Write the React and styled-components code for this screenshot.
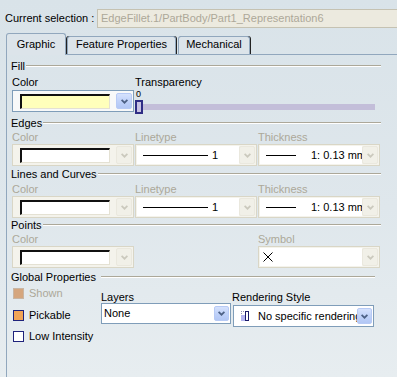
import React from 'react';
import styled, { createGlobalStyle } from 'styled-components';

const GlobalStyle = createGlobalStyle`
  html, body { margin: 0; padding: 0; }
  body {
    background: #e2e9ed;
    font-family: "Liberation Sans", Arial, sans-serif;
    font-size: 11px;
    color: #000;
  }
`;

const Window = styled.div`
  width: 397px;
  height: 377px;
  overflow: hidden;
  display: flex;
  flex-direction: column;
  background: linear-gradient(180deg, #d9e3e9 0%, #dfe7ec 55%, #e7edf0 100%);
`;

const SelectionRow = styled.div`
  display: flex;
  align-items: center;
  height: 19px;
  margin-top: 9px;
  padding-left: 5px;
  white-space: nowrap;
`;

const SelectionLabel = styled.span`
  flex: none;
  width: 92px;
  line-height: 13px;
`;

const SelectionField = styled.div`
  flex: none;
  box-sizing: border-box;
  width: 310px;
  height: 19px;
  padding-left: 3px;
  border: 1px solid #c5c2b2;
  background: #eceadf;
  color: #aca899;
  line-height: 17px;
`;

const TabRow = styled.div`
  display: flex;
  align-items: flex-end;
  box-sizing: border-box;
  height: 22px;
  margin: 5px 0 0 6px;
  border-bottom: 1px solid #91a7bd;
`;

const Tab = styled.div`
  position: relative;
  z-index: ${p => (p.$active ? 1 : 0)};
  box-sizing: border-box;
  flex: none;
  width: ${p => p.$width}px;
  height: ${p => (p.$active ? 22 : 18)}px;
  margin-left: ${p => p.$gap || 0}px;
  margin-bottom: ${p => (p.$active ? -1 : 0)}px;
  padding-top: ${p => (p.$active ? 4 : 1)}px;
  border: 1px solid #91a7bd;
  border-bottom: none;
  border-radius: 3px 3px 0 0;
  background: #dce4ea;
  text-align: center;
  line-height: 13px;
  white-space: nowrap;
  box-shadow: ${p =>
    p.$active ? 'none' : p.$leftShadow ? '1px 0 0 #222, -1px 0 0 #222' : '1px 0 0 #222'};
`;

const Panel = styled.div`
  flex: 1;
  display: flex;
  flex-direction: column;
  margin-left: 6px;
  padding: 5px 0 0 5px;
  border-left: 1px solid #91a7bd;
`;

const GroupHeader = styled.div`
  display: grid;
  grid-template-columns: ${p => (p.$labelWidth ? `${p.$labelWidth}px` : 'max-content')} 1fr;
  column-gap: 1px;
  align-items: center;
  width: ${p => p.$width}px;
  height: 13px;
  margin: ${p => p.$top || 0}px 0 0 -1px;
  line-height: 13px;
  white-space: nowrap;
`;

const HeaderRule = styled.div`
  height: 0;
  margin-bottom: 1px;
  border-top: 1px solid #aca899;
  border-bottom: 1px solid #fff;
`;

const FieldGrid = styled.div`
  display: grid;
  grid-template-columns: repeat(3, 122px);
  grid-template-rows: 13px ${p => p.$controlHeight || 22}px;
  column-gap: 1px;
  row-gap: ${p => p.$rowGap || 0}px;
  margin-top: ${p => p.$top || 0}px;
`;

const FieldLabel = styled.div`
  grid-column: ${p => p.$col} / span ${p => p.$span || 1};
  grid-row: 1;
  line-height: 13px;
  white-space: nowrap;
  color: ${p => (p.$disabled ? '#aca899' : '#000')};
`;

const Combo = styled.div`
  grid-column: ${p => p.$col || 'auto'};
  grid-row: ${p => p.$row || 'auto'};
  box-sizing: border-box;
  display: flex;
  width: ${p => (p.$width ? `${p.$width}px` : 'auto')};
  height: ${p => p.$height || 22}px;
  margin-top: ${p => p.$top || 0}px;
  padding: 1px;
  border: 1px solid ${p => (p.$disabled ? '#d9d6c6' : '#7f9db9')};
  background: ${p => (p.$disabled ? '#f4f3ec' : p.$tint || '#fff')};
`;

const ComboField = styled.div`
  flex: 1;
  min-width: 0;
  display: flex;
  align-items: center;
  overflow: hidden;
  white-space: nowrap;
  padding-left: ${p => p.$pad ?? 2}px;
  background: ${p => (p.$white ? '#fff' : 'transparent')};
  line-height: 13px;
`;

const DropButton = styled.div`
  flex: none;
  box-sizing: border-box;
  width: ${p => p.$width || 16}px;
  margin: ${p => (p.$disabled ? '0' : '1px 0')};
  display: flex;
  align-items: center;
  justify-content: center;
  border-radius: 2px;
  border: 1px solid ${p => (p.$disabled ? '#eae8de' : '#b7caf5')};
  background: ${p =>
    p.$disabled
      ? '#f1f0e8'
      : 'linear-gradient(180deg, #d6e2fd 0%, #c0d2f9 50%, #b2c7f5 100%)'};
`;

const Swatch = styled.div`
  flex: none;
  box-sizing: border-box;
  width: 90px;
  height: 15px;
  border-top: 2px solid #111;
  border-left: 2px solid #111;
  border-right: 1px solid #e4e1d3;
  border-bottom: 1px solid #e4e1d3;
  background: ${p => p.$color};
`;

const LineSample = styled.div`
  flex: none;
  width: ${p => p.$width}px;
  height: 1px;
  margin-right: ${p => p.$gap}px;
  background: #000;
`;

const SliderBox = styled.div`
  grid-column: 2 / span 2;
  grid-row: 2;
  display: flex;
  flex-direction: column;
`;

const SliderValue = styled.div`
  font-size: 9px;
  line-height: 9px;
  padding-left: 1px;
`;

const SliderTrackRow = styled.div`
  display: flex;
  align-items: center;
  width: 240px;
  margin-top: 1px;
`;

const Thumb = styled.div`
  flex: none;
  box-sizing: border-box;
  width: 8px;
  height: 14px;
  border: 2px solid #2f2d85;
  background: #c8c2e3;
`;

const Track = styled.div`
  flex: 1;
  height: 6px;
  background: #c3bed9;
`;

const GlobalBody = styled.div`
  display: flex;
  margin-top: 4px;
`;

const CheckList = styled.div`
  flex: none;
  width: 88px;
  padding-left: 1px;
  display: flex;
  flex-direction: column;
  gap: 10.5px;
`;

const CheckRow = styled.div`
  display: flex;
  align-items: center;
  height: 11px;
  gap: 5px;
  line-height: 13px;
  white-space: nowrap;
  color: ${p => (p.$disabled ? '#aca899' : '#000')};
`;

const CheckBox = styled.span`
  flex: none;
  box-sizing: border-box;
  width: 11px;
  height: 11px;
  border: 1px solid ${p => (p.$state === 'disabled' ? '#c8b6a4' : '#1f237c')};
  background: ${p =>
    p.$state === 'disabled' ? '#d5a67e' : p.$state === 'checked' ? '#f2a456' : '#fff'};
`;

const PropColumn = styled.div`
  flex: none;
  display: flex;
  flex-direction: column;
  width: ${p => p.$width}px;
  margin-left: ${p => p.$left || 0}px;
  margin-top: 4px;
`;

const PropLabel = styled.div`
  line-height: 11px;
  margin-left: ${p => p.$shift || 0}px;
  white-space: nowrap;
`;

const RenderText = styled.span`
  margin-left: 9px;
`;

const Chevron = ({ disabled }) => (
  <svg width="7" height="5" viewBox="0 0 7 5">
    <path
      d="M0.6 0.8 L3.5 3.7 L6.4 0.8"
      fill="none"
      stroke={disabled ? '#cbc9bd' : '#4d6185'}
      strokeWidth="1.7"
    />
  </svg>
);

const CrossSymbol = () => (
  <svg width="10" height="10" viewBox="0 0 10 10">
    <path d="M0.5 0.5 L9.5 9.5 M9.5 0.5 L0.5 9.5" stroke="#000" strokeWidth="1" fill="none" />
  </svg>
);

const RenderIcon = () => (
  <svg width="8" height="10" viewBox="0 0 8 10" style={{ flex: 'none' }}>
    <rect x="0" y="0" width="1" height="1" fill="#8f8fb8" />
    <rect x="2" y="0" width="1" height="1" fill="#8f8fb8" />
    <rect x="0" y="2" width="1" height="1" fill="#8f8fb8" />
    <rect x="0" y="4" width="4" height="6" fill="#b4b4f0" />
    <rect x="4" y="0" width="4" height="10" fill="#1b1b6b" />
    <rect x="5" y="1" width="2" height="8" fill="#ffffff" />
  </svg>
);

const ColorCombo = ({ col, disabled, color, tint }) => (
  <Combo $col={col} $row={2} $disabled={disabled} $tint={tint}>
    <ComboField $pad={6}>
      <Swatch $color={color} />
    </ComboField>
    <DropButton $disabled={disabled}>
      <Chevron disabled={disabled} />
    </DropButton>
  </Combo>
);

const LineCombo = ({ col, lineWidth, gap, label }) => (
  <Combo $col={col} $row={2} $disabled>
    <ComboField $white $pad={6}>
      <LineSample $width={lineWidth} $gap={gap} />
      {label}
    </ComboField>
    <DropButton $disabled>
      <Chevron disabled />
    </DropButton>
  </Combo>
);

const StyleGroup = ({ title, top, gridTop }) => (
  <>
    <GroupHeader $width={370} $top={top}>
      <span>{title}</span>
      <HeaderRule />
    </GroupHeader>
    <FieldGrid $top={gridTop}>
      <FieldLabel $col={1} $disabled>Color</FieldLabel>
      <FieldLabel $col={2} $disabled>Linetype</FieldLabel>
      <FieldLabel $col={3} $disabled>Thickness</FieldLabel>
      <ColorCombo col={1} disabled color="#fff" />
      <LineCombo col={2} lineWidth={65} gap={4} label="1" />
      <LineCombo col={3} lineWidth={30} gap={15} label="1: 0.13 mm" />
    </FieldGrid>
  </>
);

export default function App() {
  return (
    <>
      <GlobalStyle />
      <Window>
        <SelectionRow>
          <SelectionLabel>Current selection :</SelectionLabel>
          <SelectionField>EdgeFillet.1/PartBody/Part1_Representation6</SelectionField>
        </SelectionRow>

        <TabRow>
          <Tab $active $width={60}>Graphic</Tab>
          <Tab $width={109} $gap={1} $leftShadow>Feature Properties</Tab>
          <Tab $width={72} $gap={2}>Mechanical</Tab>
        </TabRow>

        <Panel>
          <GroupHeader $width={370}>
            <span>Fill</span>
            <HeaderRule />
          </GroupHeader>
          <FieldGrid $top={3} $controlHeight={23} $rowGap={1}>
            <FieldLabel $col={1}>Color</FieldLabel>
            <FieldLabel $col={2} $span={2}>Transparency</FieldLabel>
            <ColorCombo col={1} color="#ffffbb" tint="#f8f9f9" />
            <SliderBox>
              <SliderValue>0</SliderValue>
              <SliderTrackRow>
                <Thumb />
                <Track />
              </SliderTrackRow>
            </SliderBox>
          </FieldGrid>

          <StyleGroup title="Edges" top={4} gridTop={1} />
          <StyleGroup title="Lines and Curves" top={2} gridTop={2} />

          <GroupHeader $width={370} $top={1}>
            <span>Points</span>
            <HeaderRule />
          </GroupHeader>
          <FieldGrid $top={1}>
            <FieldLabel $col={1} $disabled>Color</FieldLabel>
            <FieldLabel $col={3} $disabled>Symbol</FieldLabel>
            <ColorCombo col={1} disabled color="#fff" />
            <Combo $col={3} $row={2} $disabled>
              <ComboField $white $pad={3}>
                <CrossSymbol />
              </ComboField>
              <DropButton $disabled>
                <Chevron disabled />
              </DropButton>
            </Combo>
          </FieldGrid>

          <GroupHeader $width={364} $top={3} $labelWidth={89}>
            <span>Global Properties</span>
            <HeaderRule />
          </GroupHeader>
          <GlobalBody>
            <CheckList>
              <CheckRow $disabled>
                <CheckBox $state="disabled" />
                Shown
              </CheckRow>
              <CheckRow>
                <CheckBox $state="checked" />
                Pickable
              </CheckRow>
              <CheckRow>
                <CheckBox $state="unchecked" />
                Low Intensity
              </CheckRow>
            </CheckList>
            <PropColumn $width={130}>
              <PropLabel>Layers</PropLabel>
              <Combo $height={21}>
                <ComboField $pad={1}>None</ComboField>
                <DropButton $width={15}>
                  <Chevron />
                </DropButton>
              </Combo>
            </PropColumn>
            <PropColumn $width={141} $left={2}>
              <PropLabel $shift={-1}>Rendering Style</PropLabel>
              <Combo $top={2}>
                <ComboField $pad={6}>
                  <RenderIcon />
                  <RenderText>No specific rendering</RenderText>
                </ComboField>
                <DropButton $width={15}>
                  <Chevron />
                </DropButton>
              </Combo>
            </PropColumn>
          </GlobalBody>
        </Panel>
      </Window>
    </>
  );
}
